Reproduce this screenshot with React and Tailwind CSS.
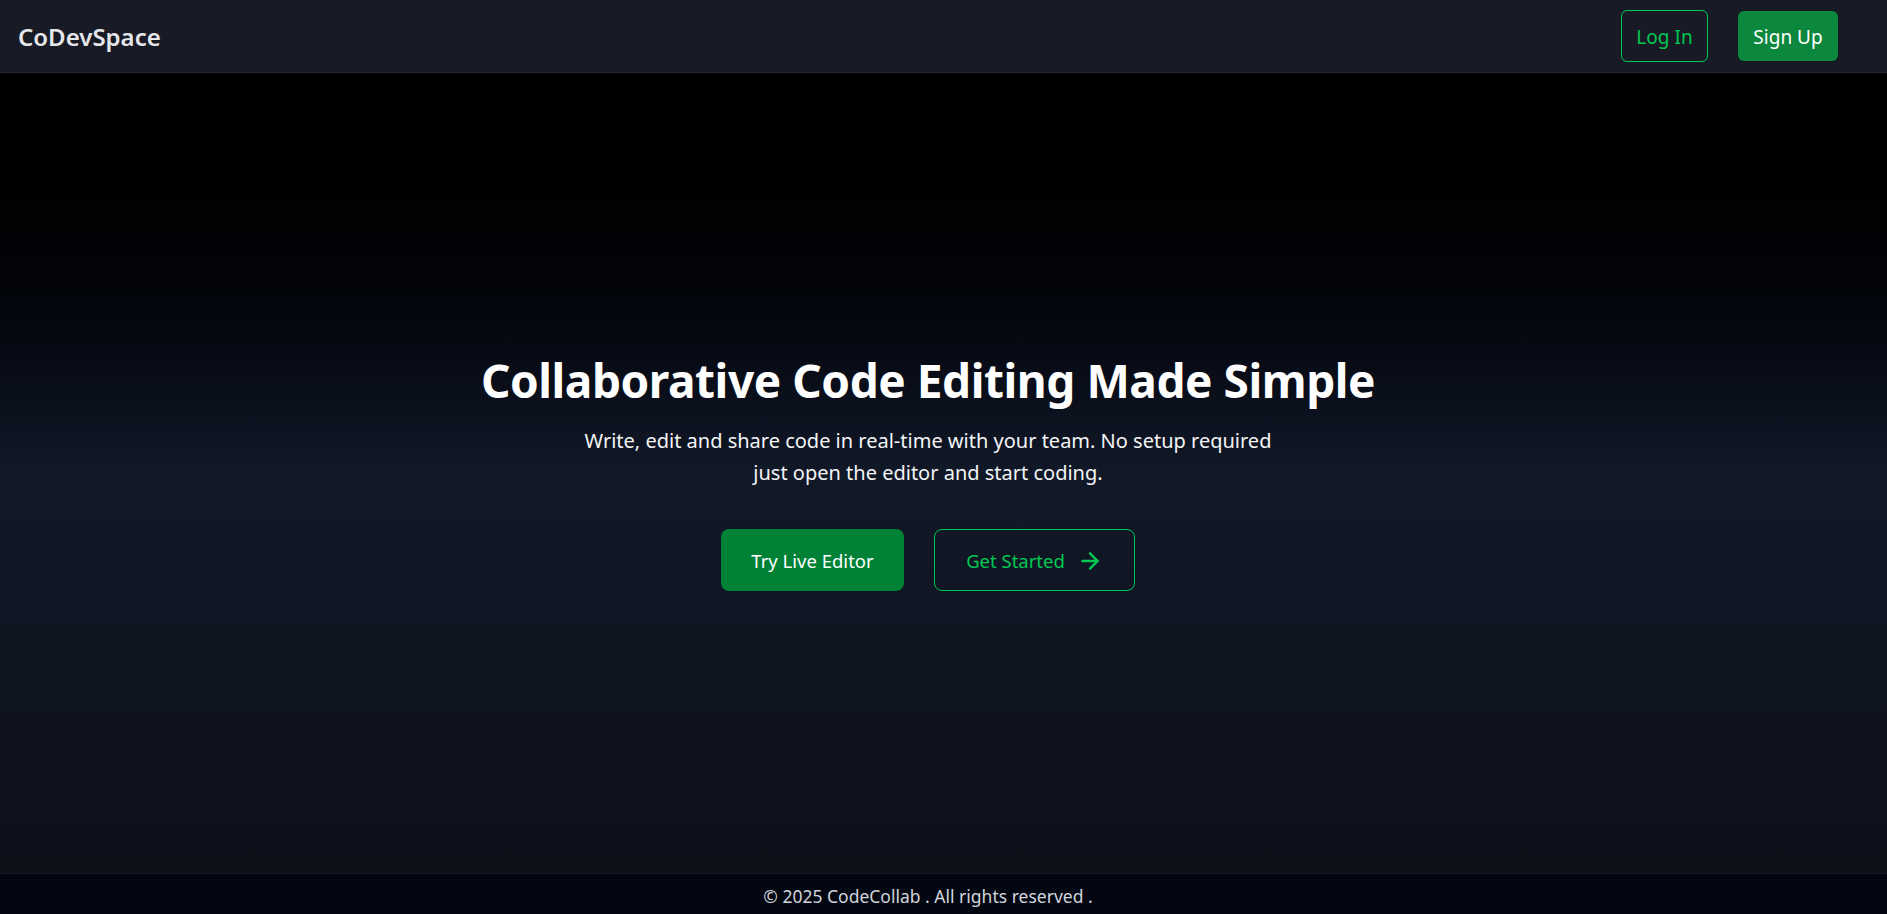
import React from 'react';
import { ArrowRight } from 'lucide-react';

const font = { fontFamily: '"Noto Sans", "Open Sans", sans-serif' };

const Navbar = () => (
  <nav className="h-[73px] shrink-0 bg-[#181a25] border-b border-[#242734] flex items-center justify-between pl-[18px] pr-[49px]">
    <span className="text-[24px] font-semibold text-gray-200 mt-[2px]">CoDevSpace</span>
    <div className="flex items-center gap-[30px]">
      <button className="h-[52px] w-[87px] rounded-md border border-green-500 text-green-500 text-[19px] pt-[2px]">
        Log In
      </button>
      <button className="h-[50px] w-[100px] rounded-md bg-[#0b873e] text-white text-[19px] pt-[2px]">
        Sign Up
      </button>
    </div>
  </nav>
);

const Hero = () => (
  <main className="flex-1 flex flex-col items-center justify-center pr-[31px] bg-gradient-to-b from-black via-[#111827] to-[#0c1019] text-center">
    <h1 className="text-[46px] leading-[48px] font-bold text-white tracking-[-0.45px]">
      Collaborative Code Editing Made Simple
    </h1>
    <p className="mt-[21px] text-[20px] leading-[32.5px] text-gray-100">
      Write, edit and share code in real-time with your team. No setup required
      <br />
      just open the editor and start coding.
    </p>
    <div className="mt-[39px] flex items-center gap-[30px]">
      <button className="h-[62px] w-[183px] rounded-lg bg-[#008236] text-white text-[18.5px] pt-[2px]">
        Try Live Editor
      </button>
      <button className="h-[62px] w-[201px] rounded-lg border border-green-500 text-green-500 text-[18.5px] pt-[2px] flex items-center justify-center gap-3">
        Get Started
        <ArrowRight size={26} strokeWidth={2.25} />
      </button>
    </div>
  </main>
);

const Footer = () => (
  <footer className="h-[41px] shrink-0 bg-[#030712] border-t border-[#141824] flex items-center justify-center pr-[31px] pt-[4px]">
    <span className="text-[17.5px] text-gray-300">© 2025 CodeCollab . All rights reserved .</span>
  </footer>
);

export default function App() {
  return (
    <div className="h-[914px] flex flex-col" style={font}>
      <Navbar />
      <Hero />
      <Footer />
    </div>
  );
}
